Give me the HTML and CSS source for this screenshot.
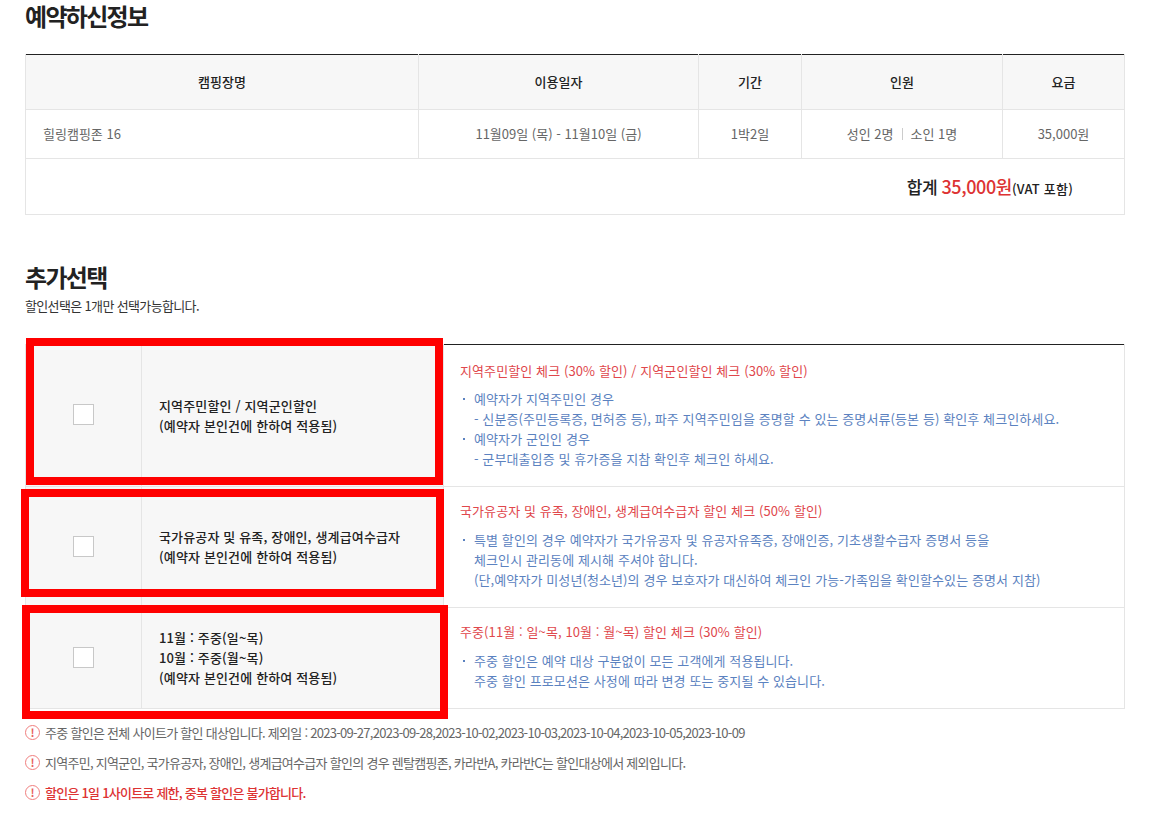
FILE: index.html
```html
<!DOCTYPE html>
<html lang="ko">
  <head>
    <meta charset="UTF-8" />
    <title>예약하신정보</title>
    <link rel="stylesheet" href="styles.css">
  </head>
  <body>
    <div class="wrap">
      <h2 class="title">예약하신정보</h2>

      <table class="info-table">
        <colgroup>
          <col class="col-name" />
          <col class="col-date" />
          <col class="col-term" />
          <col class="col-people" />
          <col />
        </colgroup>
        <thead>
          <tr>
            <th>캠핑장명</th>
            <th>이용일자</th>
            <th>기간</th>
            <th>인원</th>
            <th>요금</th>
          </tr>
        </thead>
        <tbody>
          <tr>
            <td class="left">힐링캠핑존 16</td>
            <td>11월09일 (목) - 11월10일 (금)</td>
            <td>1박2일</td>
            <td>성인 2명<span class="bar"></span>소인 1명</td>
            <td>35,000원</td>
          </tr>
          <tr>
            <td class="total" colspan="5">합계 <em>35,000원</em><small>(VAT 포함)</small></td>
          </tr>
        </tbody>
      </table>

      <h2 class="title title-add">추가선택</h2>
      <p class="sub">할인선택은 1개만 선택가능합니다.</p>

      <table class="option-table">
        <colgroup>
          <col class="col-check" />
          <col class="col-label" />
          <col />
        </colgroup>
        <tr class="row-1">
          <th><span class="check"></span></th>
          <th class="label">지역주민할인 / 지역군인할인<br />(예약자 본인건에 한하여 적용됨)</th>
          <td>
            <p class="head">지역주민할인 체크 (30% 할인) / 지역군인할인 체크 (30% 할인)</p>
            <ul>
              <li>예약자가 지역주민인 경우<br />- 신분증(주민등록증, 면허증 등), 파주 지역주민임을 증명할 수 있는 증명서류(등본 등) 확인후 체크인하세요.</li>
              <li>예약자가 군인인 경우<br />- 군부대출입증 및 휴가증을 지참 확인후 체크인 하세요.</li>
            </ul>
          </td>
        </tr>
        <tr class="row-2">
          <th><span class="check"></span></th>
          <th class="label">국가유공자 및 유족, 장애인, 생계급여수급자<br />(예약자 본인건에 한하여 적용됨)</th>
          <td>
            <p class="head">국가유공자 및 유족, 장애인, 생계급여수급자 할인 체크 (50% 할인)</p>
            <ul>
              <li>특별 할인의 경우 예약자가 국가유공자 및 유공자유족증, 장애인증, 기초생활수급자 증명서 등을<br />체크인시 관리동에 제시해 주셔야 합니다.<br />(단,예약자가 미성년(청소년)의 경우 보호자가 대신하여 체크인 가능-가족임을 확인할수있는 증명서 지참)</li>
            </ul>
          </td>
        </tr>
        <tr class="row-3">
          <th><span class="check"></span></th>
          <th class="label">11월 : 주중(일~목)<br />10월 : 주중(월~목)<br />(예약자 본인건에 한하여 적용됨)</th>
          <td>
            <p class="head">주중(11월 : 일~목, 10월 : 월~목) 할인 체크 (30% 할인)</p>
            <ul>
              <li>주중 할인은 예약 대상 구분없이 모든 고객에게 적용됩니다.<br />주중 할인 프로모션은 사정에 따라 변경 또는 중지될 수 있습니다.</li>
            </ul>
          </td>
        </tr>
      </table>

      <ul class="notice">
        <li><span class="mark">!</span>주중 할인은 전체 사이트가 할인 대상입니다. 제외일 : 2023-09-27,2023-09-28,2023-10-02,2023-10-03,2023-10-04,2023-10-05,2023-10-09</li>
        <li><span class="mark">!</span>지역주민, 지역군인, 국가유공자, 장애인, 생계급여수급자 할인의 경우 렌탈캠핑존, 카라반A, 카라반C는 할인대상에서 제외입니다.</li>
        <li class="strong"><span class="mark">!</span>할인은 1일 1사이트로 제한, 중복 할인은 불가합니다.</li>
      </ul>

      <!-- 빨간 표시 -->
      <div class="mark-box box-1"></div>
      <div class="mark-box box-2"></div>
      <div class="mark-box box-3"></div>
    </div>
  </body>
</html>
```

FILE: styles.css
```css
* {
  box-sizing: border-box;
}

body {
  margin: 0;
  background: #fff;
  font-family: "Noto Sans CJK KR", "Noto Sans", sans-serif;
  font-size: 13px;
  color: #666;
}

.wrap {
  position: relative;
  width: 1100px;
  height: 813px;
  margin-left: 25px;
}

.title {
  margin: 0;
  height: 54px;
  font-size: 24px;
  line-height: 31px;
  font-weight: 700;
  letter-spacing: -1.7px;
  color: #222;
}

.info-table,
.option-table {
  width: 100%;
  border-collapse: collapse;
  table-layout: fixed;
  border-top: 1px solid #222;
}

.info-table th,
.info-table td,
.option-table th,
.option-table td {
  border: 1px solid #e5e5e5;
}

.info-table tr:first-child th,
.option-table tr:first-child th,
.option-table tr:first-child td {
  border-top: 0;
}

.col-name {
  width: 393px;
}

.col-date {
  width: 280px;
}

.col-term {
  width: 103px;
}

.col-people {
  width: 201px;
}

.info-table th {
  height: 55px;
  padding-bottom: 3px;
  background: #f7f7f7;
  font-size: 13px;
  font-weight: 500;
  color: #222;
}

.info-table td {
  height: 49px;
  padding-bottom: 3px;
  text-align: center;
}

.info-table td.left {
  text-align: left;
  padding-left: 17px;
}

.bar {
  display: inline-block;
  width: 1px;
  height: 12px;
  margin: 0 8px;
  background: #ccc;
  vertical-align: -1px;
}

.info-table td.total {
  height: 56px;
  padding-right: 51px;
  text-align: right;
  font-size: 17px;
  font-weight: 500;
  letter-spacing: -0.4px;
  color: #222;
}

.total em {
  font-style: normal;
  font-size: 18px;
  color: #dd3333;
}

.total small {
  font-size: 13px;
  letter-spacing: 0.2px;
}

.title-add {
  height: 35px;
  margin-top: 46px;
}

.sub {
  margin: 0 0 23px;
  height: 25px;
  font-size: 13px;
  line-height: 20px;
  letter-spacing: -0.65px;
  color: #333;
}

.col-check {
  width: 116px;
}

.col-label {
  width: 302px;
}

.row-1 {
  height: 142px;
}

.row-2 {
  height: 121px;
}

.row-3 {
  height: 101px;
}

.option-table th {
  background: #f7f7f7;
  text-align: center;
}

.option-table th.label {
  padding-left: 17px;
  text-align: left;
  font-size: 13px;
  line-height: 20px;
  font-weight: 500;
  letter-spacing: 0.15px;
  color: #222;
}

.check {
  display: block;
  width: 21px;
  height: 21px;
  margin: -2px auto 0;
  background: #fff;
  border: 1px solid #c8c8c8;
}

.option-table td {
  padding: 0 16px 2px;
  font-size: 13px;
  line-height: 20px;
  letter-spacing: 0.1px;
}

.head {
  margin: 0 0 8px;
  color: #e0474c;
}

.row-2 .head,
.row-3 .head {
  margin: -1px 0 9px;
}

.option-table ul {
  margin: 0;
  padding: 0;
  list-style: none;
  color: #5b82c0;
}

.option-table li {
  position: relative;
  padding-left: 14px;
}

.option-table li::before {
  content: "";
  position: absolute;
  left: 3px;
  top: 9px;
  width: 2px;
  height: 2px;
  background: #5b82c0;
}

.notice {
  margin: 13px 0 0;
  padding: 0;
  list-style: none;
  font-size: 13px;
  letter-spacing: -0.72px;
}

.notice li {
  display: flex;
  align-items: center;
  height: 20px;
  margin-bottom: 10px;
}

.notice .strong {
  color: #dd3333;
  font-weight: 500;
  letter-spacing: -0.77px;
}

.mark {
  flex: none;
  width: 15px;
  height: 15px;
  margin-right: 5px;
  border: 1.5px solid #f07f7f;
  border-radius: 50%;
  font-size: 11px;
  line-height: 12px;
  font-weight: 700;
  text-align: center;
  color: #e85c5c;
  letter-spacing: 0;
}

.mark-box {
  position: absolute;
  border: 8px solid #ff0000;
}

.box-1 {
  left: 1px;
  top: 338px;
  width: 417px;
  height: 147px;
}

.box-2 {
  left: -4px;
  top: 489px;
  width: 423px;
  height: 108px;
}

.box-3 {
  left: -3px;
  top: 605px;
  width: 426px;
  height: 114px;
}
```
